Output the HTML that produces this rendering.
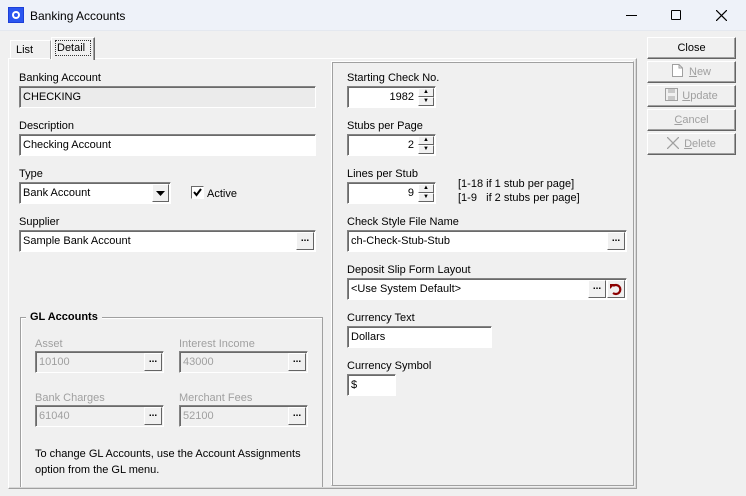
<!DOCTYPE html>
<html><head><style>
*{box-sizing:border-box;margin:0;padding:0}
body{width:746px;height:496px;background:#f0f0f0;font-family:"Liberation Sans",Arial,sans-serif;font-size:11px;color:#000;position:relative;overflow:hidden}
.a{position:absolute}
.title{left:0;top:0;width:746px;height:31px;background:#eef2f9;border-bottom:1px solid #e4e8ef}
.lbl{position:absolute;font-size:11px;white-space:nowrap;margin-top:1px}
.in{position:absolute;background:#fff;border:1px solid;border-color:#838383 #fff #fff #838383;box-shadow:inset 1px 1px 0 #6a6a6a;padding:4px 0 0 3px;white-space:nowrap;height:22px}
.dis{background:#f0f0f0;color:#a0a0a0}
.ro{background:#ebebeb}
.dots{position:absolute;right:1px;top:1px;width:18px;height:18px;background:#f0f0f0;border:1px solid;border-color:#fff #646464 #646464 #fff;font-size:10px;text-align:center;line-height:12px;font-weight:bold;color:#000}
.btn{position:absolute;left:647px;width:89px;height:22px;border:1px solid;border-color:#fff #646464 #646464 #fff;box-shadow:inset -1px -1px 0 #a0a0a0;text-align:center;line-height:20px;font-size:11px}
.btn.d{color:#a0a0a0}
.spin{position:absolute;right:1px;top:1px;width:16px;height:18px}
.spin div{height:9px;border:1px solid;border-color:#fff #646464 #646464 #fff;background:#f0f0f0;font-size:6px;line-height:7px;text-align:center}
</style></head><body>
<div class="a title"></div>
<svg class="a" style="left:8px;top:7px" width="16" height="16"><rect x="0" y="0" width="16" height="16" fill="#1c3fd8"/><rect x="1" y="1" width="14" height="14" fill="#2a56f0"/><circle cx="8" cy="8" r="4" fill="#fff"/><circle cx="8" cy="8" r="2" fill="#2a56f0"/></svg>
<div class="lbl" style="left:30px;top:8px;font-size:12px">Banking Accounts</div>
<div class="a" style="left:626px;top:15px;width:11px;height:1px;background:#000"></div>
<div class="a" style="left:671px;top:10px;width:10px;height:10px;border:1px solid #000;border-radius:1px"></div>
<svg class="a" style="left:716px;top:10px" width="11" height="11"><path d="M0 0L11 11M11 0L0 11" stroke="#000" stroke-width="1.2"/></svg>

<div class="a" style="left:8px;top:58px;width:629px;height:431px;border:1px solid;border-color:#fff #a0a0a0 #a0a0a0 #fff;box-shadow:inset -1px -1px 0 #d8d8d8"></div>
<div class="a" style="left:10px;top:40px;width:41px;height:19px;border:1px solid;border-color:#fff #a0a0a0 transparent #fff;border-bottom:none"></div>
<div class="lbl" style="left:16px;top:43px">List</div>
<div class="a" style="left:51px;top:37px;width:44px;height:23px;background:#f0f0f0;border:1px solid;border-color:#fff #696969 transparent #fff;border-bottom:none;box-shadow:inset -1px 0 0 #a0a0a0"></div>
<div class="a" style="left:55px;top:40px;width:36px;height:16px;border:1px dotted #333"></div>
<div class="lbl" style="left:57px;top:41px">Detail</div>

<div class="a" style="left:331px;top:61px;width:303px;height:425px;border:1px solid;border-color:#fff #a0a0a0 #a0a0a0 #fff;box-shadow:inset 1px 1px 0 #a0a0a0"></div>

<div class="lbl" style="left:19px;top:71px">Banking Account</div>
<div class="in ro" style="left:19px;top:86px;width:297px">CHECKING</div>
<div class="lbl" style="left:19px;top:119px">Description</div>
<div class="in" style="left:19px;top:134px;width:297px">Checking Account</div>
<div class="lbl" style="left:19px;top:167px">Type</div>
<div class="in" style="left:19px;top:182px;width:152px">Bank Account
<div class="dots" style="width:17px"><svg width="9" height="5" style="margin-top:6px"><path d="M0 0H9L4.5 5Z" fill="#000"/></svg></div></div>
<div class="a" style="left:191px;top:186px;width:13px;height:13px;background:#fff;border:1px solid;border-color:#696969 #fff #fff #696969"></div>
<svg class="a" style="left:193px;top:188px" width="9" height="9"><path d="M1 4L3.5 7L8 1" stroke="#000" stroke-width="2" fill="none"/></svg>
<div class="lbl" style="left:207px;top:187px">Active</div>
<div class="lbl" style="left:19px;top:215px">Supplier</div>
<div class="in" style="left:19px;top:230px;width:297px">Sample Bank Account<div class="dots">...</div></div>

<div class="a" style="left:20px;top:317px;width:303px;height:170px;border:1px solid #a0a0a0;border-bottom:none;box-shadow:inset 1px 1px 0 #fff"></div>
<div class="lbl" style="left:26px;top:310px;background:#f0f0f0;padding:0 4px;font-weight:bold">GL Accounts</div>
<div class="lbl" style="left:35px;top:337px;color:#a0a0a0">Asset</div>
<div class="in dis" style="left:35px;top:351px;width:129px">10100<div class="dots">...</div></div>
<div class="lbl" style="left:179px;top:337px;color:#a0a0a0">Interest Income</div>
<div class="in dis" style="left:179px;top:351px;width:129px">43000<div class="dots">...</div></div>
<div class="lbl" style="left:35px;top:391px;color:#a0a0a0">Bank Charges</div>
<div class="in dis" style="left:35px;top:405px;width:129px">61040<div class="dots">...</div></div>
<div class="lbl" style="left:179px;top:391px;color:#a0a0a0">Merchant Fees</div>
<div class="in dis" style="left:179px;top:405px;width:129px">52100<div class="dots">...</div></div>
<div class="lbl" style="left:35px;top:447px">To change GL Accounts, use the Account Assignments</div>
<div class="lbl" style="left:35px;top:463px">option from the GL menu.</div>

<div class="lbl" style="left:347px;top:71px">Starting Check No.</div>
<div class="in" style="left:347px;top:86px;width:89px;text-align:right;padding-right:21px">1982<div class="spin"><div>▲</div><div>▼</div></div></div>
<div class="lbl" style="left:347px;top:119px">Stubs per Page</div>
<div class="in" style="left:347px;top:134px;width:89px;text-align:right;padding-right:21px">2<div class="spin"><div>▲</div><div>▼</div></div></div>
<div class="lbl" style="left:347px;top:167px">Lines per Stub</div>
<div class="in" style="left:347px;top:182px;width:89px;text-align:right;padding-right:21px">9<div class="spin"><div>▲</div><div>▼</div></div></div>
<div class="lbl" style="left:458px;top:177px">[1-18 if 1 stub per page]</div>
<div class="lbl" style="left:458px;top:191px">[1-9&nbsp;&nbsp; if 2 stubs per page]</div>
<div class="lbl" style="left:347px;top:215px">Check Style File Name</div>
<div class="in" style="left:347px;top:230px;width:280px">ch-Check-Stub-Stub<div class="dots">...</div></div>
<div class="lbl" style="left:347px;top:263px">Deposit Slip Form Layout</div>
<div class="in" style="left:347px;top:278px;width:280px">&lt;Use System Default&gt;<div class="dots" style="right:20px">...</div>
<div class="dots" style="right:1px"><svg width="14" height="14" style="margin-top:1px"><path d="M4 4A4.5 4.5 0 1 1 4 11" stroke="#8b0000" stroke-width="2.2" fill="none"/><path d="M1 2L6 2L1 7Z" fill="#8b0000"/></svg></div></div>
<div class="lbl" style="left:347px;top:311px">Currency Text</div>
<div class="in" style="left:347px;top:326px;width:145px">Dollars</div>
<div class="lbl" style="left:347px;top:359px">Currency Symbol</div>
<div class="in" style="left:347px;top:374px;width:49px">$</div>

<div class="btn" style="top:37px">Close</div>
<div class="btn d" style="top:61px"><svg width="11" height="13" style="vertical-align:-2px;margin-right:6px"><path d="M0.5 0.5H7L10.5 4V12.5H0.5Z M7 0.5V4H10.5" stroke="#a0a0a0" fill="#fff"/></svg><u>N</u>ew</div>
<div class="btn d" style="top:85px"><svg width="13" height="13" style="vertical-align:-2px;margin-right:4px"><rect x="0.5" y="0.5" width="12" height="12" fill="none" stroke="#a0a0a0"/><rect x="3" y="1" width="7" height="4" fill="#c8c8c8"/><rect x="3" y="8" width="7" height="4" fill="#c8c8c8"/></svg><u>U</u>pdate</div>
<div class="btn d" style="top:109px"><u>C</u>ancel</div>
<div class="btn d" style="top:133px"><svg width="12" height="12" style="vertical-align:-2px;margin-right:5px"><path d="M0 0L12 12M12 0L0 12" stroke="#a0a0a0" stroke-width="1.3"/></svg><u>D</u>elete</div>
</body></html>
